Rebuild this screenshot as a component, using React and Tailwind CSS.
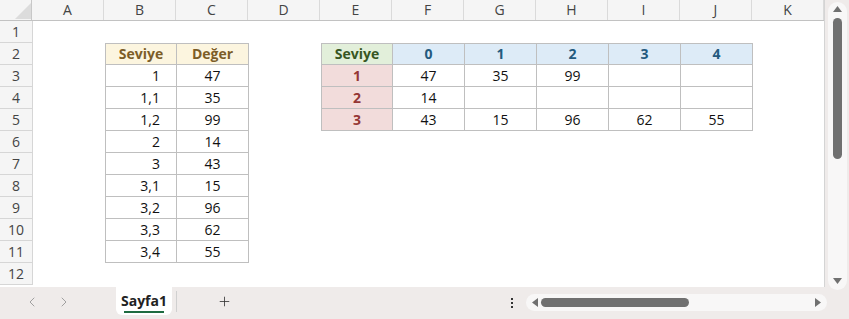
import { ChevronLeft, ChevronRight, Plus } from "lucide-react";

const cols = ["A", "B", "C", "D", "E", "F", "G", "H", "I", "J", "K"];

const left = [
  ["1", "47"],
  ["1,1", "35"],
  ["1,2", "99"],
  ["2", "14"],
  ["3", "43"],
  ["3,1", "15"],
  ["3,2", "96"],
  ["3,3", "62"],
  ["3,4", "55"],
];

const right = [
  ["1", "47", "35", "99", "", ""],
  ["2", "14", "", "", "", ""],
  ["3", "43", "15", "96", "62", "55"],
];

const edge = "border-b border-r border-[#bfbfbf]";

// returns [text, classes] for a sheet cell
function cellFor(row, col) {
  if (row === 2) {
    if (col === 1) return ["Seviye", `${edge} border-l border-t bg-[#fcf5df] text-[#7c5d28] font-bold justify-center`];
    if (col === 2) return ["Değer", `${edge} border-t bg-[#fcf5df] text-[#7c5d28] font-bold justify-center`];
    if (col === 4) return ["Seviye", `${edge} border-l border-t bg-[#e2efda] text-[#375623] font-bold justify-center`];
    if (col >= 5 && col <= 9) return [String(col - 5), `${edge} border-t bg-[#ddebf7] text-[#245a7e] font-bold justify-center`];
  }
  if (row >= 3 && row <= 11) {
    const r = left[row - 3];
    if (col === 1) return [r[0], `${edge} border-l justify-end pr-4`];
    if (col === 2) return [r[1], `${edge} justify-center`];
  }
  if (row >= 3 && row <= 5) {
    const r = right[row - 3];
    if (col === 4) return [r[0], `${edge} border-l bg-[#f2dcdb] text-[#953735] font-bold justify-center`];
    if (col >= 5 && col <= 9) return [r[col - 4], `${edge} justify-center`];
  }
  return ["", ""];
}

export default function App() {
  const rows = Array.from({ length: 12 }, (_, i) => i + 1);

  return (
    <div className="flex h-[319px] w-[849px] flex-col overflow-hidden bg-[#efebea] font-['Open_Sans',sans-serif] text-[14px] text-[#111]">
      <div className="flex h-[287px]">
        <div className="w-[825px] overflow-hidden border-r border-[#d4d4d4] bg-white">
          <div className="flex h-[21px] border-b border-[#c2c2c2] bg-[#f5f5f5] text-[#444]">
            <div className="relative w-[33px] border-r border-[#c8c8c8]">
              <svg className="absolute left-[15px] top-[3px]" width="16" height="16" viewBox="0 0 16 16">
                <polygon points="16,0 16,16 0,16" fill="#dcdcdc" />
              </svg>
            </div>
            {cols.map((c) => (
              <div key={c} className="flex w-[72px] shrink-0 items-center justify-center border-r border-[#dadada] leading-none">
                {c}
              </div>
            ))}
          </div>
          {rows.map((r) => (
            <div key={r} className="flex h-[22px]">
              <div className="flex w-[33px] shrink-0 items-center justify-center border-b border-r border-[#d6d6d6] bg-[#f5f5f5] text-[#444]">
                {r}
              </div>
              {cols.map((c, ci) => {
                const [text, cls] = cellFor(r, ci);
                return (
                  <div key={c} className={`flex w-[72px] shrink-0 items-center leading-none ${cls}`}>
                    {text}
                  </div>
                );
              })}
            </div>
          ))}
        </div>

        <div className="flex w-[24px] justify-center pt-[2px]">
          <div className="flex h-[288px] w-[19px] flex-col items-center rounded-full bg-[#f8f7f7] pt-[4px]">
            <svg width="9" height="6" viewBox="0 0 9 6">
              <polygon points="4.5,0 9,6 0,6" fill="#707070" />
            </svg>
            <div className="mt-[6px] h-[141px] w-[9px] rounded-full bg-[#707070]" />
            <div className="flex-1" />
            <svg className="mb-[6px]" width="9" height="6" viewBox="0 0 9 6">
              <polygon points="0,0 9,0 4.5,6" fill="#707070" />
            </svg>
          </div>
        </div>
      </div>

      <div className="flex h-[32px] items-start">
        <div className="flex h-[30px] items-center pl-[24px] text-[#9a9a9a]">
          <ChevronLeft size={16} strokeWidth={1.4} />
          <ChevronRight size={16} strokeWidth={1.4} className="ml-[16px]" />
        </div>
        <div className="ml-[44px] flex h-[28px] w-[56px] flex-col items-center justify-center rounded-b-[6px] bg-white">
          <span className="mt-[2px] font-bold leading-[18px] text-[#222]">Sayfa1</span>
          <div className="mt-[1px] h-[2px] w-[40px] bg-[#1e6b40]" />
        </div>
        <div className="ml-[4px] mt-[4px] h-[21px] w-px bg-[#d0d0d0]" />
        <div className="ml-[40px] flex h-[28px] items-center text-[#333]">
          <Plus size={15} strokeWidth={1.3} />
        </div>
        <div className="ml-[278px] flex h-[34px] w-[3px] flex-col items-center justify-center gap-[2px] pb-[2px]">
          <span className="h-[2px] w-[2px] bg-[#333]" />
          <span className="h-[2px] w-[2px] bg-[#333]" />
          <span className="h-[2px] w-[2px] bg-[#333]" />
        </div>
        <div className="ml-[13px] mt-[7px] flex h-[17px] w-[301px] items-center rounded-full bg-[#f8f7f7] px-[6px]">
          <svg width="6" height="9" viewBox="0 0 6 9">
            <polygon points="0,4.5 6,0 6,9" fill="#707070" />
          </svg>
          <div className="ml-[3px] h-[9px] w-[148px] rounded-full bg-[#707070]" />
          <div className="flex-1" />
          <svg width="6" height="9" viewBox="0 0 6 9">
            <polygon points="0,0 6,4.5 0,9" fill="#707070" />
          </svg>
        </div>
      </div>
    </div>
  );
}
